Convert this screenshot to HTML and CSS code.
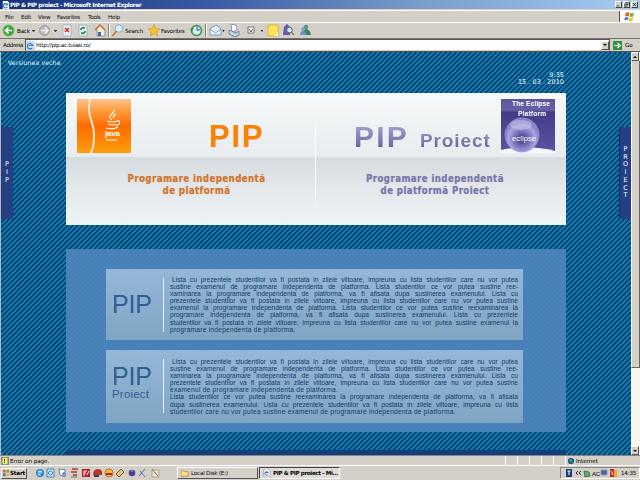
FILE: index.html
```
<!DOCTYPE html>
<html lang="ro">
<head>
<meta charset="utf-8">
<title>PIP &amp; PIP proiect</title>
<link rel="stylesheet" href="styles.css">
</head>
<body>
<header class="titlebar">
  <svg class="ie" viewBox="0 0 10 10"><path d="M1 0h6l2 2v8H1z" fill="#fff"/><path d="M7 7.5A3 3 0 1 1 7.5 5H3" fill="none" stroke="#2874c8" stroke-width="1.3"/></svg>
  <b>PIP &amp; PIP proiect - Microsoft Internet Explorer</b>
  <span class="win"><i><svg viewBox="0 0 7 7"><path d="M1 5.5h3" stroke="#000"/></svg></i><i><svg viewBox="0 0 7 7"><path d="M2.5 2V.9h3.2V4H4M1 3h3v3H1z" fill="none" stroke="#000" stroke-width=".8"/></svg></i><i><svg viewBox="0 0 7 7"><path d="M1.5 1.5l4 4m0-4l-4 4" stroke="#000"/></svg></i></span>
</header>
<nav class="menu"><span>File</span><span>Edit</span><span>View</span><span>Favorites</span><span>Tools</span><span>Help</span>
  <div class="flag"><svg viewBox="0 0 12 12"><path d="M2 2q2-1.500 4 0L5 6Q3 5 1 6z" fill="#e85a28"/><path d="M7 2q2 1 4 0l-1 4q-2 1-4 0z" fill="#75b632"/><path d="M1 7q2-1 4 0l-1 3Q2 9 0 10z" fill="#3c7fd0"/><path d="M6 7q2 1 4 0l-1 4q-2 1-4 0z" fill="#f4bd26"/></svg></div>
</nav>
<div class="toolbar">
<svg viewBox="0 0 320 15" width="320" height="15">
  <circle cx="8.500" cy="7.500" r="5.500" fill="#38a336" stroke="#73bf67"/><path d="M12 7.500H5.500M8.500 4.500l-3 3 3 3" fill="none" stroke="#fff" stroke-width="1.700"/>
  <text x="17" y="9.500">Back</text><path d="M32 7h3l-1.500 2zM54 7h3l-1.500 2z"/>
  <circle cx="44.500" cy="7.500" r="5" fill="#bbb" stroke="#999"/><path d="M41 7.500h7M45 4.500l3 3-3 3" fill="none" stroke="#eee" stroke-width="1.500"/>
  <path d="M63 2h8v11h-8zM79 2h8v11h-8z" fill="#e3f0fb" stroke="#91a9c2" stroke-width=".7"/><path d="M65 5l4 4m0-4l-4 4" stroke="#e02a18" stroke-width="1.600"/><path d="M81 7q0-3 4-2M85 8q0 3-4 2" fill="none" stroke="#25983a" stroke-width="1.800"/>
  <path d="M96 7l4-5 5 5v6h-8V7z" fill="#f5ead4" stroke="#8a91a8"/><path d="M95 7l5-5 5 5" fill="none" stroke="#c76b3a" stroke-width="1.500"/><path d="M98 9h3v4h-3z" fill="#42669f"/>
  <path d="M108.500 1v13M205.500 1v13" stroke="#858178"/><path d="M109.500 1v13M206.500 1v13" stroke="#fff"/>
  <circle cx="119" cy="5.500" r="3.800" fill="#d9f2ff" stroke="#84acc9"/><path d="M116.500 8l-4 5" stroke="#b8854b" stroke-width="2"/><text x="125" y="9.500">Search</text>
  <path d="M154 1.500l1.800 4 4.200.4-3.200 2.800 1 4.300-3.800-2.300-3.800 2.300 1-4.300L148 5.900l4.200-.4z" fill="#fac52d" stroke="#cf8e1e" stroke-width=".6"/><text x="161" y="9.500">Favorites</text>
  <circle cx="196.500" cy="7.500" r="5" fill="#d8eef3" stroke="#369057" stroke-width="1.500"/><path d="M197 3.500v4l3-1" fill="none" stroke="#276491"/><path d="M190 6l4-1-2 4z" fill="#2b9f40"/>
  <path d="M210 6l6-4 5 4v6h-11z" fill="#eaf5ff" stroke="#729bc5"/><path d="M210 6l5.500 4 5.500-4" fill="none" stroke="#729bc5"/><path d="M222.500 7h2l-1 2zM261 7h2l-1 2z"/>
  <path d="M231 1l5 1 1 5-5 2z" fill="#fff" stroke="#8497b8"/><path d="M229 7l7 3 3-2v4l-4 2-6-3z" fill="#c3d3e6" stroke="#74849c"/>
  <path d="M248 4h6v6h-6z" fill="#fff" stroke="#777"/><path d="M249 6l2 3 2-3" fill="none" stroke="#555"/>
  <path d="M268 2h10v11h-10z" fill="#ffe25b" stroke="#dfb635"/><path d="M274 13l4-4v4z" fill="#fff5b5"/>
  <path d="M284 4l3-3 3 3v8h-7z" fill="#6755ad"/><circle cx="289.500" cy="7" r="2.800" fill="#cfe9f3" stroke="#536b94"/><path d="M291 9l3 3" stroke="#7b8b52" stroke-width="1.500"/>
  <circle cx="306" cy="4" r="2.300" fill="#4e9b8b"/><path d="M302 12q0-6 4-6t5 6z" fill="#39836e"/><circle cx="303" cy="6" r="2" fill="#78a6cf"/><path d="M300 12q0-4 3-4t3 4z" fill="#6a92bb"/>
</svg></div>
<div class="address"><span class="alabel">Address</span><div class="field"><svg class="ie" viewBox="0 0 10 10"><path d="M1 0h6l2 2v8H1z" fill="#d6ebff" stroke="#4b8bc4" stroke-width=".5"/><path d="M7 7.500A3 3 0 1 1 7.500 5H3" fill="none" stroke="#2874c8" stroke-width="1.300"/></svg><span>http://pip.ac.tuiasi.ro/</span><i class="drop"></i></div><svg class="go" viewBox="0 0 9 9"><path d="M0 0h9v9H0z" fill="#2d9440"/><path d="M1.500 4.500h5M4.500 2l2.500 2.500L4.500 7" fill="none" stroke="#fff" stroke-width="1.200"/></svg><span>Go</span></div>
<div class="browser">
<main class="page">
  <div class="old">Versiunea veche</div>
  <div class="clock">9:35<br>15 . 03 . 2010</div>
  <section class="hero">
    <div class="half java">
      <svg class="logo" viewBox="0 0 54 54"><defs><linearGradient id="o" x2="0" y2="1"><stop stop-color="#ffc28e"/><stop offset=".25" stop-color="#ff9635"/><stop offset=".5" stop-color="#ff6c00"/><stop offset="1" stop-color="#ff9d0c"/></linearGradient></defs><path d="M0 0h54v54H0z" fill="url(#o)"/><path d="M13 0C9 20 18 22 17 37Q17 47 14 54" fill="none" stroke="#ffe7cf" stroke-width="2"/><g fill="none" stroke="#fff" stroke-width="1.100"><path d="M37 11q0 3-3 5t1 5M39 15q-4 2-2 4M30 22q6 2 10 0M31 25q5 2 8 0M29 29q7 2 12-1M40 22q4-1 2 3l-3 2M29 41h11"/></g><text x="28" y="37" fill="#fff" font-size="8" font-weight="bold" textLength="15">java</text></svg>
      <h1>PIP</h1><p>Programare independentă<br>de platformă</p>
    </div>
    <div class="half eclipse">
      <h1>PIP <small>Proiect</small></h1>
      <svg class="logo" viewBox="0 0 54 54"><defs><linearGradient id="v" x2="0" y2="1"><stop stop-color="#5c559c"/><stop offset=".2" stop-color="#6761a5"/><stop offset=".25" stop-color="#443c88"/><stop offset="1" stop-color="#5a55a0"/></linearGradient><radialGradient id="s" cy=".62"><stop stop-color="#3a3874"/><stop offset=".45" stop-color="#7772bd"/><stop offset=".8" stop-color="#aaa5e0"/><stop offset="1" stop-color="#8883c7"/></radialGradient></defs><path d="M0 0h54v54H0z" fill="url(#v)"/><path d="M0 54v-3q27-6 54 1v2z" fill="#f7f7ff"/><circle cx="21" cy="36" r="17" fill="url(#s)" stroke="#9995d2" stroke-width=".7"/><ellipse cx="20" cy="26" rx="11" ry="5" fill="#c7c4f0" opacity=".55"/><g fill="#fff" font-weight="bold"><text x="11" y="7.300" font-size="6.600" textLength="38">The Eclipse</text><text x="17" y="16.800" font-size="6.600" textLength="28">Platform</text><text x="11" y="42" font-size="7.500" font-weight="normal" textLength="24">eclipse</text></g></svg>
      <p>Programare independentă<br>de platformă Proiect</p>
    </div>
  </section>
  <section class="panel">
    <article><h2>PIP</h2><div class="copy">
      <p class="first">Lista cu prezentele studentilor va fi postata in zilele viitoare, impreuna cu lista studentilor care nu vor putea</p>
      <p>sustine examenul de programare independenta de platforma. Lista studentilor ce vor putea sustine ree-</p>
      <p>xaminarea la programare independenta de platforma, va fi afisata dupa sustinerea examenului. Lista cu</p>
      <p>prezentele studentilor va fi postata in zilele viitoare, impreuna cu lista studentilor care nu vor putea sustine</p>
      <p>examenul la programare independenta de platforma. Lista studentilor ce vor putea sustine reexaminarea la</p>
      <p>programare independenta de platforma, va fi afisata dupa sustinerea examenului. Lista cu prezentele</p>
      <p>studentilor va fi postata in zilele viitoare, impreuna cu lista studentilor care nu vor putea sustine examenul la</p>
      <p class="end">programare independenta de platforma.</p></div></article>
    <article class="second"><h2>PIP<small>Proiect</small></h2><div class="copy">
      <p class="first">Lista cu prezentele studentilor va fi postata in zilele viitoare, impreuna cu lista studentilor care nu vor putea</p>
      <p>sustine examenul de programare independenta de platforma. Lista studentilor ce vor putea sustine ree-</p>
      <p>xaminarea la programare independenta de platforma, va fi afisata dupa sustinerea examenului. Lista cu</p>
      <p>prezentele studentilor va fi postata in zilele viitoare, impreuna cu lista studentilor care nu vor putea sustine</p>
      <p class="end">examenul de programare independenta de platforma.</p>
      <p>Lista studentilor ce vor putea sustine reexaminarea la programare independenta de platforma, va fi afisata</p>
      <p>dupa sustinerea examenului. Lista cu prezentele studentilor va fi postata in zilele viitoare, impreuna cu lista</p>
      <p class="end">studentilor care nu vor putea sustine examenul de programare independenta de platforma.</p></div></article>
  </section>
  <div class="footer"></div>
  <aside class="tab left">P<br>I<br>P</aside><aside class="tab right">P<br>R<br>O<br>I<br>E<br>C<br>T</aside>
</main>
<div class="scroll"><i class="up"></i><b></b><i class="down"></i></div>
</div>
<div class="status"><svg viewBox="0 0 9 9"><path d="M1 0h7v9H1z" fill="#f3f36b" stroke="#444"/><path d="M4 2v3m0 1v1" stroke="#222"/></svg><span>Error on page.</span><div class="cells"><i></i><i></i><i></i><i></i><i></i><i></i></div><svg viewBox="0 0 9 9"><circle cx="4.500" cy="4.500" r="3.500" fill="#164e91"/><path d="M2 3l3-1 1 2-2 3zM6 5l2 1-2 2z" fill="#43a557"/></svg><span>Internet</span></div>
<footer class="taskbar">
  <div class="start"><svg viewBox="0 0 9 9"><path d="M1 1h3v3H1z" fill="#e55d2c"/><path d="M5 1h3v3H5z" fill="#75ae36"/><path d="M1 5h3v3H1z" fill="#3572c4"/><path d="M5 5h3v3H5z" fill="#eebd2b"/></svg><b>Start</b></div>
  <svg class="quick" viewBox="0 0 126 12"><circle cx="6" cy="6" r="3.300" fill="#cfe8fa" stroke="#2386cf" stroke-width="1.600"/><path d="M3 6h6M9 8l-3-1" stroke="#2386cf"/><path d="M13 2h7v8h-7z" fill="#d9efff" stroke="#3c83b8"/><circle cx="16.500" cy="6" r="2" fill="none" stroke="#297fc0"/><path d="M25 2l6 1v7l-5-2z" fill="#fff" stroke="#697e9e"/><circle cx="30" cy="7" r="2" fill="#6b94c8"/><path d="M38 2h6M37 5h6M39 8h4" stroke="#b33335" stroke-width="1.500"/><path d="M37 10h6" stroke="#777"/><path d="M48 2h8v8h-8z" fill="#b71d26"/><path d="M50 9V4h3M50 6h2M53 8l2-4" stroke="#fff" fill="none"/><path d="M59 8q0-6 5-6t4 6z" fill="#b83329"/><path d="M60 9h5" stroke="#3c3948" stroke-width="2"/><circle cx="75" cy="6" r="4" fill="#ffc62c" stroke="#c36728"/><path d="M72 7h6" stroke="#bc2524" stroke-width="2"/><path d="M82 7l5-5 3 3-5 5z" fill="#eac37c" stroke="#735835"/><circle cx="98" cy="6" r="3.300" fill="#4b3e9d"/><path d="M97 4h2" stroke="#b9b5f0"/><path d="M105 9l6-7M106 4l5 6" stroke="#4176a7"/><path d="M118 3h7v7h-7z" fill="#efe8c8" stroke="#aaa176"/><path d="M118 2l6 7" stroke="#6b7e96"/></svg>
  <div class="task one"><svg viewBox="0 0 9 9"><path d="M0 2h3l1 1h4v5H0z" fill="#ffe477" stroke="#8d7940" stroke-width=".7"/></svg>Local Disk (E:)</div>
  <div class="task two"><svg viewBox="0 0 9 9"><path d="M1 0h5l2 2v7H1z" fill="#fff" stroke="#6678b3" stroke-width=".7"/><path d="M6 6A2 2 0 1 1 6 4H3" fill="none" stroke="#254daf"/></svg><b>PIP &amp; PIP proiect - Mi...</b></div>
  <div class="tray"><svg viewBox="0 0 54 12"><path d="M1 2h6v8H1z" fill="#183f79"/><path d="M2.500 4h3M4 4v4" stroke="#fff"/><path d="M13 4l-2 2 2 2m3-4l-2 2 2 2" fill="none" stroke="#000" stroke-width=".8"/><path d="M19 4l5 1 1 4-5 1z" fill="#66ae6f" stroke="#3c8047"/><text x="27" y="8.500">AC</text><path d="M36 3h6v5h-6z" fill="#4c5c96" stroke="#8b97c0"/><path d="M45 2h4v8h-4z" fill="#c62c25"/><path d="M49 3h3v7h-3z" fill="#efaa23"/><path d="M46 4l2 4" stroke="#fff"/></svg><span>14:35</span></div>
</footer>
</body>
</html>
```
FILE: styles.css
```
* { box-sizing: border-box; }
body { margin: 0; width: 640px; height: 480px; overflow: hidden; background: #d4d0c8; font: 6px "DejaVu Sans", sans-serif; color: #000; display: flex; flex-direction: column; }
svg { display: block; flex: none; }
svg text { font-family: "Liberation Sans", sans-serif; }
h1, h2, p { margin: 0; }
.titlebar { height: 10px; flex: none; background: linear-gradient(90deg, #15317b, #3a5ba5 33%, #799dcc 66%, #a6caf0); color: #fff; display: flex; align-items: center; border-bottom: 1px solid #d4d0c8; }
.titlebar b { font: bold 5.8px "DejaVu Sans", sans-serif; letter-spacing: -.42px; white-space: nowrap; }
.ie { width: 9px; height: 9px; }
.titlebar .ie { margin: 0 0 0 2px; width: 8px; height: 8px; }
.win { display: flex; gap: 1px; margin: 0 2px 0 auto; }
.win i { width: 7px; height: 7px; background: #d4d0c8; border: 1px solid; border-color: #fff #444 #444 #fff; }
.win svg { width: 5px; height: 5px; }
.menu { height: 13px; flex: none; display: flex; align-items: center; padding-left: 5px; border-top: 1px solid #fff; border-bottom: 1px solid #fff; font-size: 5.6px; letter-spacing: -.25px; }
.menu span:nth-child(1) { width: 16px; } .menu span:nth-child(2) { width: 17px; } .menu span:nth-child(3) { width: 19px; } .menu span:nth-child(4) { width: 31px; } .menu span:nth-child(5) { width: 20px; }
.flag { margin-left: auto; width: 21px; height: 11px; background: #fff; border-left: 1px solid #555; }
.flag svg { width: 11px; height: 11px; margin-left: 4px; }
.toolbar { height: 16px; flex: none; border-bottom: 1px solid #77736c; }
.toolbar text { font: 5.6px "DejaVu Sans", sans-serif; letter-spacing: -.2px; }
.address { height: 12px; flex: none; display: flex; align-items: center; font-size: 5.6px; letter-spacing: -.2px; }
.alabel { width: 25px; padding-left: 3px; letter-spacing: -.3px; }
.field { width: 585px; height: 12px; background: #fff; border: 1px solid #555; border-bottom-color: #d4d0c8; display: flex; align-items: center; }
.field span { margin-left: 1px; font-size: 5.6px; letter-spacing: -.25px; }
.drop, .up, .down { background: #d4d0c8; border: 1px solid; border-color: #fff #555 #555 #fff; width: 8px; height: 9px; display: flex; align-items: center; justify-content: center; }
.drop { margin-left: auto; }
.drop::after, .down::after, .up::after { content: ""; border: 2px solid transparent; border-top: 2px solid #000; border-bottom: 0; }
.up::after { transform: rotate(180deg); }
.go { width: 9px; height: 9px; margin: 0 3px; }
.browser { height: 404px; flex: none; display: flex; border-top: 1px solid #555; }
.page { position: relative; width: 631px; height: 403px; border-left: 1px solid #b7b9bd; background-color: #0a70a9; background-image: repeating-linear-gradient(135deg, #08233e 0 .35px, #0878b2 1.1px 2.9px, #08233e 3.535px); }
.old { height: 20px; padding: 7px 0 0 7px; color: #e9f6ff; font-size: 6.2px; letter-spacing: .1px; line-height: 8px; }
.clock { height: 21px; text-align: right; padding: 0 67px 0 0; color: #fff; font-size: 6.4px; line-height: 7px; letter-spacing: .1px; }
.hero { width: 500px; height: 132px; margin-left: 65px; background: linear-gradient(#f7f9fa, #e8ecee 48%, #d6dbdf 49%, #e3e7ea 70%, #eef4f6); display: flex; position: relative; }
.hero::after { content: ""; position: absolute; left: 249px; top: 27px; width: 1px; height: 90px; background: linear-gradient(transparent, #fff 20% 75%, transparent); }
.half { width: 250px; display: grid; height: 132px; grid-template-rows: 64px 1fr; }
.java { grid-template-columns: 78px 1fr; }
.eclipse { grid-template-columns: 185px 1fr; }
.logo { width: 54px; height: 54px; margin: 6px 0 0 11px; }
.eclipse .logo { margin: 6px 0 0 0; }
h1 { font: bold 30px/32px "Liberation Sans", sans-serif; letter-spacing: 1.8px; color: #f98203; padding: 28px 0 0 65px; white-space: nowrap; }
.java h1 { font-size: 31px; }
.eclipse h1 { padding-left: 38px; letter-spacing: 2.2px; background: linear-gradient(#aaa7d0 30px, #65649c 56px); -webkit-background-clip: text; background-clip: text; color: transparent; }
h1 small { font-size: 19px; letter-spacing: .9px; margin-left: 1px; }
.half p { grid-column: 1 / 3; text-align: center; padding: 16px 0 0 11px; font: bold 9.6px/12px "DejaVu Sans Condensed", "DejaVu Sans", sans-serif; letter-spacing: .42px; color: #c9783a; text-shadow: 0 0 1px #f4ad70; }
.eclipse p { padding-left: 0; padding-right: 12px; color: #7979a9; text-shadow: 0 0 1px #aaa9cf; }
.panel { width: 500px; height: 183px; margin: 24px 0 0 65px; padding: 20px 40px 0; background: rgba(78, 132, 189, .92); }
article { width: 417px; height: 71px; background: linear-gradient(#96b7d8, #7fa5c3); display: flex; color: #173e68; }
.second { height: 73px; margin-top: 10px; }
h2 { width: 58px; height: 54px; margin-top: 9px; border-right: 1px solid #e6f6ff; padding: 14px 0 0 6px; color: #315f95; font: 25px/24px "Liberation Sans", sans-serif; letter-spacing: -.2px; }
.second h2 { padding-top: 6px; line-height: 23px; }
h2 small { display: block; font-size: 11.5px; line-height: 13px; letter-spacing: .2px; }
.copy { width: 348px; margin: 7px 0 0 6px; font: 6.6px/7.1px "Liberation Sans", sans-serif; color: #123c67; }
.second .copy { margin-top: 8px; }
.copy p { height: 7.1px; text-align: justify; text-align-last: justify; white-space: nowrap; }
.copy .end { text-align-last: left; letter-spacing: .25px; }
.copy .first { padding-left: 2px; }
.footer { width: 500px; height: 5px; margin: 18px 0 0 65px; background: #123f7b; }
.tab { position: absolute; top: 75px; width: 12px; height: 92px; background: #243f86; color: #fff; display: flex; align-items: center; justify-content: center; text-align: center; font: 6.5px/7.8px "DejaVu Sans", sans-serif; }
.left { left: 0; } .right { right: 0; border-left: 1px solid #112c67; }
.scroll { width: 9px; background: #f7f6f3; display: flex; flex-direction: column; }
.scroll b { height: 307px; background: #d4d0c8; border-right: 1px solid #666; border-bottom: 1px solid #666; border-left: 1px solid #fff; }
.down { margin-top: auto; }
.status { height: 10px; flex: none; border-top: 1px solid #8d8480; display: flex; align-items: center; font-size: 5.6px; letter-spacing: -.05px; }
.status svg { width: 8px; height: 8px; margin: 0 1px; }
.cells { display: flex; gap: 11px; margin-left: auto; } .cells i { height: 9px; width: 1px; background: #fff; }
.status > span:last-child { width: 64px; }
.taskbar { height: 15px; flex: none; border-top: 1px solid #fff; display: flex; align-items: center; font-size: 5.6px; letter-spacing: -.2px; }
.start { width: 26px; height: 11px; margin-left: 1px; border: 1px solid; border-color: #fff #555 #555 #fff; display: flex; align-items: center; font-size: 5.6px; }
.start svg { width: 8px; height: 8px; margin-right: 0; }
.quick { width: 126px; height: 12px; margin-left: 7px; }
.task { height: 12px; display: flex; align-items: center; gap: 2px; border: 1px solid; border-color: #fff #555 #555 #fff; padding-left: 3px; white-space: nowrap; }
.task svg { width: 8px; height: 8px; }
.one { width: 81px; margin-left: 17px; } .two { width: 81px; margin-left: 1px; border-color: #444 #fff #fff #444; background: #dedad4; }
.two b { letter-spacing: -.35px; }
.tray { margin-left: auto; display: flex; align-items: center; width: 80px; height: 12px; border: 1px solid; border-color: #888 #fff #fff #888; gap: 2px; padding-left: 4px; }
.tray svg { width: 54px; height: 12px; } .tray text { font-size: 6px; }
```
